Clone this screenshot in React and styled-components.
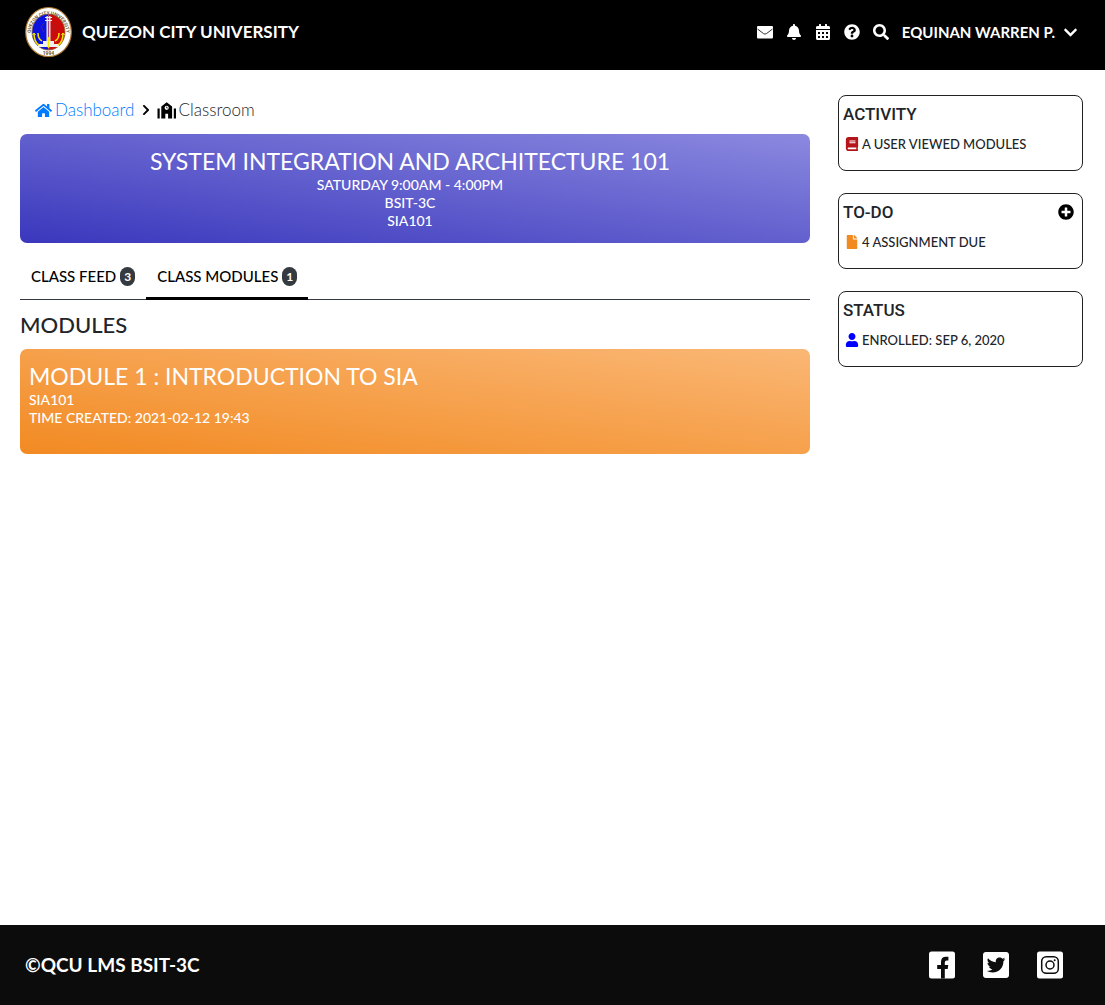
import React from 'react';
import styled, { createGlobalStyle } from 'styled-components';
import {
  FaBell, FaCalendarAlt, FaQuestionCircle, FaSearch, FaChevronDown, FaChevronRight,
  FaHome, FaBook, FaFile, FaUser, FaPlusCircle, FaTwitterSquare,
} from 'react-icons/fa';

const Global = createGlobalStyle`
  * { box-sizing: border-box; }
  body {
    margin: 0;
    background: #fff;
    color: #212529;
    font: 400 16px/24px Lato, "Open Sans", sans-serif;
  }
  h1, h2, h3, p { margin: 0; }
  a { color: inherit; text-decoration: none; }
  button { border: 0; padding: 0; background: none; color: inherit; font: inherit; cursor: pointer; }
  svg { display: block; flex: none; }
`;

const Page = styled.div`
  min-height: 100vh;
  display: flex;
  flex-direction: column;
`;

const Header = styled.header`
  display: flex;
  align-items: center;
  justify-content: space-between;
  height: 70px;
  padding: 0 27px 6px 24px;
  background: #000;
  color: #fff;
`;

const Brand = styled.a`
  display: flex;
  align-items: center;
  gap: 9px;
  font-size: 17px;
  line-height: 22px;
  font-weight: 700;
`;

const Tools = styled.nav`
  display: flex;
  align-items: center;
  gap: 13px;
`;

const Account = styled.button`
  display: flex;
  align-items: center;
  gap: 8px;
  font-size: 15px;
  font-weight: 700;
`;

const Body = styled.div`
  flex: 1;
  display: grid;
  grid-template-columns: minmax(0, 1fr) 245px;
  gap: 28px;
  align-items: start;
  padding: 25px 22px 25px 20px;
`;

const Crumbs = styled.nav`
  display: flex;
  align-items: center;
  gap: 5px;
  padding: 3px 15px 12px;
  font-size: 17px;
`;

const Crumb = styled.span`
  display: flex;
  align-items: center;
  gap: 3px;
  color: ${(p) => p.$tone};
  font-weight: 300;
`;

const Banner = styled.section`
  min-height: ${(p) => p.$height};
  padding: ${(p) => p.$padding};
  border-radius: 7px;
  color: #fff;
  background: ${(p) => p.$fill};
  text-align: ${(p) => p.$align};
  font-size: 14px;
  line-height: 18px;
  font-weight: 500;
`;

const BannerTitle = styled.h1`
  font-size: 23px;
  line-height: 30px;
  font-weight: 400;
`;

const Tabs = styled.nav`
  display: flex;
  margin-top: 8px;
  border-bottom: 1px solid #343a40;
`;

const Tab = styled.a`
  display: flex;
  align-items: center;
  gap: 4px;
  height: 49px;
  margin-bottom: -1px;
  padding: 4px 11px 0;
  border-bottom: 3px solid ${(p) => (p.$active ? '#000' : 'transparent')};
  color: #000;
  font-size: 15px;
  font-weight: 500;
`;

const Badge = styled.span`
  padding: 0 4px;
  border-radius: 10px;
  background: #343a40;
  color: #fff;
  font-size: 12px;
  line-height: 19px;
  font-weight: 700;
`;

const SectionTitle = styled.h2`
  margin: 10px 0;
  font-size: 22px;
  line-height: 29px;
  font-weight: 500;
`;

const Side = styled.aside`
  display: grid;
  gap: 22px;
`;

const Card = styled.section`
  min-height: 76px;
  padding: 8px 8px 8px 4px;
  border: 1px solid #222;
  border-radius: 8px;
`;

const CardHead = styled.div`
  display: flex;
  align-items: center;
  justify-content: space-between;
`;

const CardTitle = styled.h3`
  font: 500 17px/20px Roboto, sans-serif;
`;

const CardLine = styled.p`
  display: flex;
  align-items: center;
  gap: 3px;
  padding: 10px 2px 0;
  font-size: 13px;
  line-height: 20px;
  font-weight: 500;
`;

const Footer = styled.footer`
  display: flex;
  align-items: center;
  justify-content: space-between;
  height: 80px;
  padding: 0 42px 0 25px;
  background: #0c0c0c;
  color: #fff;
  font-size: 19px;
  font-weight: 700;
`;

const Social = styled.nav`
  display: flex;
  align-items: center;
  gap: 28px;
`;

function Seal() {
  return (
    <svg width="49" height="52" viewBox="0 0 49 52" aria-hidden="true">
      <defs>
        <path id="arc" d="M6.500 28 A18 19.500 0 0 1 42.500 28" />
      </defs>
      <ellipse cx="24.5" cy="26" rx="22.8" ry="24.5" fill="#fff" stroke="#a9762c" strokeWidth="1.2" />
      <path d="M24.500 8 A16.500 18 0 0 0 24.500 44z" fill="#0b12df" />
      <path d="M24.500 8 A16.500 18 0 0 1 24.500 44z" fill="#cc0b0b" />
      <ellipse cx="24.500" cy="26" rx="16.500" ry="18" fill="none" stroke="#8d6a33" strokeWidth="0.8" />
      <path d="M22.500 37V10h1.400v27zM25.100 37V10h1.400v27zM21 11h7v1h-7zM21 14h7v1h-7zM14 38h21v3h-21zM19 35h11v3h-11z" fill="#eee" />
      <path d="M10 27q0 9 5 12M14 27q0 6 4 8M39 27q0 9-5 12M35 27q0 6-4 8M24.500 31v11" fill="none" stroke="#f3e600" strokeWidth="1.500" />
      <path d="M8.500 29l1.500-2 1.500 2M37.500 29l1.500-2 1.500 2" fill="none" stroke="#f3e600" />
      <path d="M20 17l-3 4 3 5M29 17l3 4-3 5" fill="none" stroke="#773044" strokeWidth="0.600" />
      <text fontSize="4.600" fontWeight="700" fill="#6e552d" fontFamily="Roboto, sans-serif">
        <textPath href="#arc" startOffset="50%" textAnchor="middle">QUEZON CITY UNIVERSITY</textPath>
      </text>
      <text x="24.500" y="49" fontSize="5" fontWeight="700" fill="#6e552d" textAnchor="middle" fontFamily="Roboto, sans-serif">1994</text>
    </svg>
  );
}

function Envelope() {
  return (
    <svg width="16" height="16" viewBox="0 0 16 16" aria-hidden="true">
      <rect y="2" width="16" height="12.500" rx="1" fill="currentColor" />
      <path d="M0.500 5l6 4.600q1.500 1 3 0l6-4.600" fill="none" stroke="#333" strokeWidth="1" />
    </svg>
  );
}

function SchoolHouse() {
  return (
    <svg width="19" height="17" viewBox="0 0 19 17" aria-hidden="true">
      <path d="M0.500 6.500h2.200v10h-2.200zM16.800 6.500h2.200v10h-2.200z" fill="#000" />
      <path d="M4.300 16.500V4.500L9.700 0.300l5.400 4.200v12h-4v-4.800h-2.800v4.800z" fill="#000" />
      <circle cx="9.700" cy="5.800" r="2.100" fill="#fff" />
      <path d="M9.600 4.500v1.500h1.200" fill="none" stroke="#000" strokeWidth="0.700" />
    </svg>
  );
}

function Facebook() {
  return (
    <svg width="26" height="28" viewBox="0 0 26 28" aria-hidden="true">
      <rect width="26" height="27" y="0.500" rx="2.500" fill="#fff" />
      <path d="M12 27.500V18H8.200v-4H12v-3q0-5.200 5-5.200h2.400v3.700h-1.700q-1.900 0-1.900 2V14h3.500l-0.600 4h-2.900v9.500z" fill="#0c0c0c" />
    </svg>
  );
}

const Twitter = styled(FaTwitterSquare)`
  width: 26px;
  height: 30px;
`;

function Instagram() {
  return (
    <svg width="26" height="28" viewBox="0 0 26 28" aria-hidden="true">
      <rect width="26" height="27" y="0.500" rx="2.500" fill="#fff" />
      <rect x="4.700" y="5.700" width="16.600" height="16.600" rx="4.600" fill="none" stroke="#0c0c0c" strokeWidth="1.500" />
      <circle cx="13" cy="14" r="4" fill="none" stroke="#0c0c0c" strokeWidth="1.500" />
      <circle cx="17.700" cy="9.300" r="1" fill="#0c0c0c" />
    </svg>
  );
}

const tools = [
  ['Messages', Envelope],
  ['Notifications', FaBell],
  ['Calendar', FaCalendarAlt],
  ['Help', FaQuestionCircle],
  ['Search', FaSearch],
];

const socials = [
  ['Facebook', Facebook],
  ['Twitter', Twitter],
  ['Instagram', Instagram],
];

const cards = [
  { title: 'ACTIVITY', Icon: FaBook, color: '#b3151b', text: 'A USER VIEWED MODULES' },
  { title: 'TO-DO', Icon: FaFile, color: '#f28a22', text: '4 ASSIGNMENT DUE', add: true },
  { title: 'STATUS', Icon: FaUser, color: '#0000ff', text: 'ENROLLED: SEP 6, 2020' },
];

export default function App() {
  return (
    <Page>
      <Global />
      <Header>
        <Brand href="#"><Seal />QUEZON CITY UNIVERSITY</Brand>
        <Tools>
          {tools.map(([label, Icon]) => (
            <button key={label} aria-label={label}><Icon size={16} /></button>
          ))}
          <Account>EQUINAN WARREN P.<FaChevronDown size={15} /></Account>
        </Tools>
      </Header>
      <Body>
        <main>
          <Crumbs>
            <Crumb as="a" href="#" $tone="#007bff"><FaHome size={17} />Dashboard</Crumb>
            <FaChevronRight size={12} color="#000" />
            <Crumb $tone="#212529"><SchoolHouse />Classroom</Crumb>
          </Crumbs>
          <Banner $height="109px" $padding="12px 10px 13px 0" $align="center" $fill="linear-gradient(to top right, #3a37bd, #8b89df)">
            <BannerTitle>SYSTEM INTEGRATION AND ARCHITECTURE 101</BannerTitle>
            <p>SATURDAY 9:00AM - 4:00PM</p>
            <p>BSIT-3C</p>
            <p>SIA101</p>
          </Banner>
          <Tabs>
            <Tab href="#">CLASS FEED <Badge>3</Badge></Tab>
            <Tab href="#" $active>CLASS MODULES <Badge>1</Badge></Tab>
          </Tabs>
          <SectionTitle>MODULES</SectionTitle>
          <Banner $height="105px" $padding="12px 9px" $align="left" $fill="linear-gradient(to top right, #f28a22, #fab775)">
            <BannerTitle as="h3">MODULE 1 : INTRODUCTION TO SIA</BannerTitle>
            <p>SIA101</p>
            <p>TIME CREATED: 2021-02-12 19:43</p>
          </Banner>
        </main>
        <Side>
          {cards.map(({ title, Icon, color, text, add }) => (
            <Card key={title}>
              <CardHead>
                <CardTitle>{title}</CardTitle>
                {add && <button aria-label="Add to-do"><FaPlusCircle size={16} color="#000" /></button>}
              </CardHead>
              <CardLine><Icon size={14} color={color} />{text}</CardLine>
            </Card>
          ))}
        </Side>
      </Body>
      <Footer>
        <p>©QCU LMS BSIT-3C</p>
        <Social>
          {socials.map(([label, Icon]) => (
            <a key={label} href="#" aria-label={label}><Icon /></a>
          ))}
        </Social>
      </Footer>
    </Page>
  );
}
